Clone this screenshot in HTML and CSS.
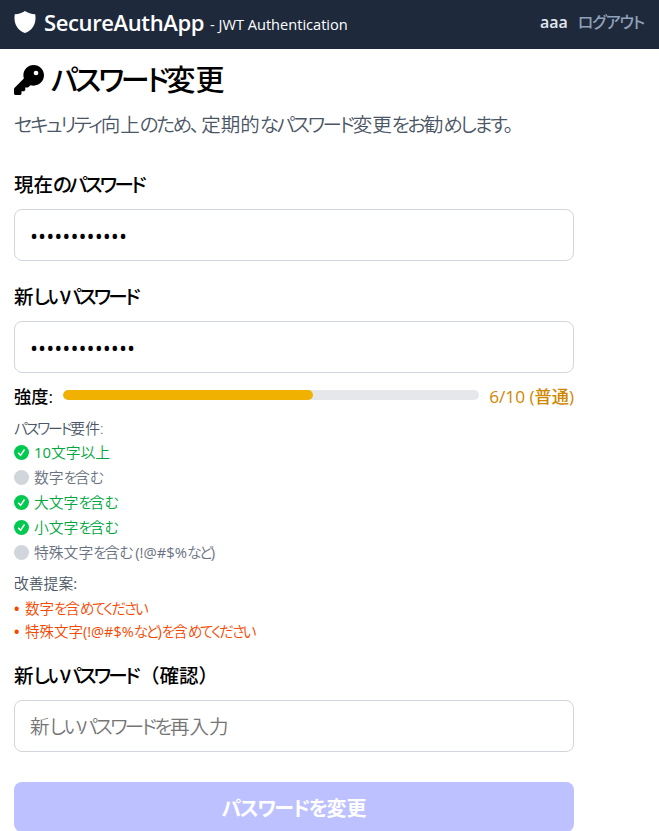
FILE: index.html
```html
<!DOCTYPE html>
<html lang="ja">
<head>
<meta charset="utf-8">
<title>SecureAuthApp</title>
<link rel="stylesheet" href="styles.css">
</head>
<body>
<header class="bar">
  <svg class="shield" viewBox="0 0 22 22"><path fill="#fff" d="M11 0C13.8 1.8 17.2 3 21.2 3.3C22.6 11.5 19.5 19 11 22C2.500 19-.6 11.500.8 3.300C4.800 3 8.200 1.800 11 0Z"/></svg>
  <span class="brand">SecureAuthApp</span>
  <span class="tagline">- JWT Authentication</span>
  <nav class="nav"><span class="user">aaa</span><a class="logout"><span class="k">ログアウト</span></a></nav>
</header>
<main class="page">
  <h1 class="title"><svg class="key" viewBox="0 0 512 512"><path d="M336 352c97.200 0 176-78.800 176-176S433.200 0 336 0S160 78.800 160 176c0 18.700 2.900 36.800 8.300 53.700L7 391c-4.500 4.500-7 10.600-7 17v80c0 13.300 10.700 24 24 24h80c13.300 0 24-10.700 24-24V448h40c13.300 0 24-10.700 24-24V384h40c6.400 0 12.500-2.500 17-7l33.300-33.300c16.900 5.400 35 8.300 53.700 8.300zM376 96a40 40 0 1 1 0 80 40 40 0 1 1 0-80z"/></svg><span><span class="k">パスワード</span>変更</span></h1>
  <p class="lead"><span class="k">セキュリティ</span>向上<span class="k">のため</span><span class="comma">、</span>定期的<span class="k">なパスワード</span>変更<span class="k">をお</span>勧<span class="k">めします。</span></p>
  <form class="form">
    <label class="label" for="current">現在<span class="k">のパスワード</span></label>
    <input class="input" id="current" type="password" value="abcdefghijkl">
    <label class="label" for="new">新<span class="k">しいパスワード</span></label>
    <input class="input" id="new" type="password" value="abcdefghijklm">
    <div class="strength"><span class="strength-name">強度:</span><div class="track"><div class="fill"></div></div><span class="score">6/10 (普通)</span></div>
    <p class="caption"><span class="k">パスワード</span>要件:</p>
    <ul class="rules">
      <li class="rule ok"><svg class="dot" viewBox="0 0 16 16"><circle cx="8" cy="8" r="8"/><path d="M4.500 8.300L7 11L11.200 4.800"/></svg><span><span class="latin">10</span>文字以上</span></li>
      <li class="rule"><svg class="dot" viewBox="0 0 16 16"><circle cx="8" cy="8" r="8"/></svg><span>数字<span class="k">を</span>含<span class="k">む</span></span></li>
      <li class="rule ok"><svg class="dot" viewBox="0 0 16 16"><circle cx="8" cy="8" r="8"/><path d="M4.500 8.300L7 11L11.200 4.800"/></svg><span>大文字<span class="k">を</span>含<span class="k">む</span></span></li>
      <li class="rule ok"><svg class="dot" viewBox="0 0 16 16"><circle cx="8" cy="8" r="8"/><path d="M4.500 8.300L7 11L11.200 4.800"/></svg><span>小文字<span class="k">を</span>含<span class="k">む</span></span></li>
      <li class="rule"><svg class="dot" viewBox="0 0 16 16"><circle cx="8" cy="8" r="8"/></svg><span>特殊文字<span class="k">を</span>含<span class="k">む</span><span class="latin"> (!@#$%</span><span class="k">など</span><span class="latin">)</span></span></li>
    </ul>
    <p class="caption advice">改善提案<span class="latin">:</span></p>
    <ul class="tips">
      <li class="tip"><span class="bullet">•</span><span>数字<span class="k">を</span>含<span class="k">めてください</span></span></li>
      <li class="tip"><span class="bullet">•</span><span>特殊文字<span class="latin">(!@#$%</span><span class="k">など</span><span class="latin">)</span><span class="k">を</span>含<span class="k">めてください</span></span></li>
    </ul>
    <label class="label confirm-label" for="confirm">新<span class="k">しいパスワード</span><span class="paren">（</span>確認）</label>
    <div class="input placeholder" id="confirm">新<span class="k">しいパスワードを</span>再入力</div>
    <button class="submit" type="button" disabled><span class="k">パスワードを</span>変更</button>
  </form>
</main>
</body>
</html>
```
FILE: styles.css
```css
* { box-sizing: border-box; margin: 0; padding: 0; }
html, body { height: 831px; overflow: hidden; }
body {
  background: #fff;
  color: #000;
  font-family: "Open Sans", "Noto Sans CJK JP", sans-serif;
  font-size: 19.5px;
}
ul { list-style: none; }
.k { font-feature-settings: "palt"; letter-spacing: -0.1em; }
.latin { font-weight: 400; }
.bar { display: flex; align-items: center; height: 49px; padding: 0 15px 5px 14px; background: #1e293b; color: #fff; line-height: 28px; }
.shield { width: 22px; height: 22px; margin: -1px 8px 0 0; }
.brand { font-size: 22px; font-weight: 600; letter-spacing: -0.38px; width: 166px; white-space: nowrap; }
.tagline { font-size: 14.6px; padding-top: 4px; white-space: nowrap; }
.nav { display: flex; gap: 10px; margin-left: auto; font-size: 16px; font-weight: 600; }
.user { color: #e2e8f0; }
.logout { color: #90a1b9; font-weight: 500; }
.logout .k { letter-spacing: -0.07em; }
.page { width: 588px; padding: 12px 14px 0; white-space: nowrap; }
.title { display: flex; align-items: center; gap: 7px; height: 38px; font-size: 29px; font-weight: 500; line-height: 36px; }
.title .k { letter-spacing: -0.105em; }
.key { width: 30px; height: 30px; }
.lead { height: 30px; margin-top: 11px; color: #4a5565; line-height: 30px; font-weight: 350; }
.lead .k { letter-spacing: -0.12em; }
.comma { letter-spacing: -8px; }
.form { display: flex; flex-direction: column; margin-top: 32px; }
.label { height: 26px; margin-bottom: 11px; line-height: 26px; font-weight: 500; }
.label .k { letter-spacing: -0.135em; }
.paren { margin-left: 2px; }
.input { height: 52px; flex-shrink: 0; border: 1px solid #d1d5dc; border-radius: 8px; padding: 0 15px; font: inherit; color: #000; background: #fff; }
input.input { font-size: 21.5px; letter-spacing: 0px; padding-top: 1px; }
#current { margin-bottom: 23px; }
.strength { display: flex; align-items: center; height: 26px; margin-top: 9px; font-size: 17.2px; font-weight: 500; }
.strength-name { width: 49px; }
.track { width: 416px; height: 10px; margin-top: -1px; border-radius: 5px; background: #e5e7eb; overflow: hidden; }
.fill { width: 60%; height: 10px; border-radius: 5px; background: #f0b100; }
.score { margin-left: auto; color: #d08700; }
.caption { height: 20px; margin-top: 10px; line-height: 20px; font-size: 14.8px; color: #4a5565; font-weight: 350; }
.caption .k { letter-spacing: -0.14em; }
.rules { display: flex; flex-direction: column; gap: 5px; margin-top: 4px; }
.rule { display: flex; align-items: center; gap: 5px; height: 20px; line-height: 22px; font-size: 14.8px; color: #6a7282; font-weight: 350; }
.rule .k { letter-spacing: -0.15em; }
.ok { color: #00a63e; }
.dot { width: 15px; height: 15px; fill: #d1d5dc; }
.ok .dot { fill: #00c950; }
.dot path { fill: none; stroke: #fff; stroke-width: 1.6; }
.advice { margin-top: 11px; }
.tips { display: flex; flex-direction: column; gap: 3px; margin-top: 5px; }
.tip { display: flex; gap: 5px; height: 20px; line-height: 21px; font-size: 14.5px; color: #f54900; font-weight: 350; }
.tip .k { letter-spacing: -0.135em; }
.bullet { width: 6px; font-weight: 700; }
.confirm-label { margin-top: 22px; }
.placeholder { line-height: 51px; color: #757575; font-weight: 350; }
.placeholder .k { letter-spacing: -0.13em; }
.submit { height: 50px; flex-shrink: 0; margin-top: 30px; border: 0; border-radius: 8px; background: #bdc1ff; color: #fff; font: inherit; font-weight: 600; font-size: 20px; }
.submit .k { letter-spacing: -0.07em; }
```
